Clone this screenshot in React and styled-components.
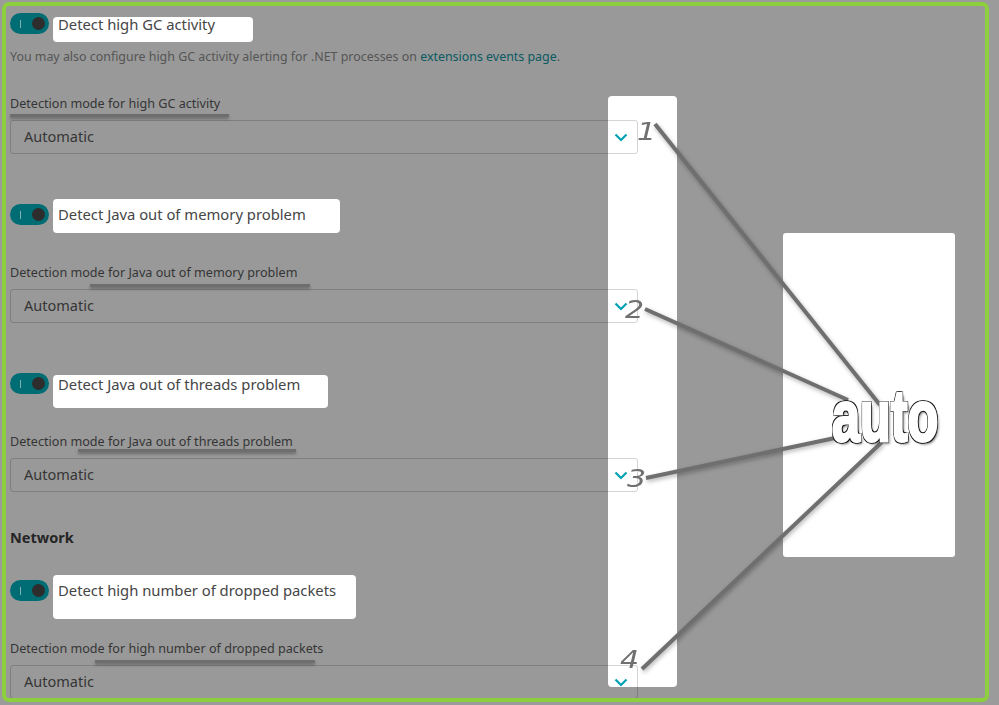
import React from "react";
import styled, { createGlobalStyle } from "styled-components";

const Global = createGlobalStyle`
  html, body { margin: 0; padding: 0; background: #9b9b9b; }
  body { width: 999px; height: 705px; overflow: hidden; font-family: "Noto Sans", "Liberation Sans", sans-serif; }
`;

const Page = styled.div`
  position: relative;
  box-sizing: border-box;
  width: 999px;
  height: 705px;
  padding: 2px 0 0 2px;
`;

const Frame = styled.div`
  box-sizing: border-box;
  width: 987px;
  height: 700px;
  border: 4px solid #8dcf3c;
  border-radius: 7px;
  background: #999;
  overflow: hidden;
  padding: 7px 4px 0;
`;

const ToggleRow = styled.div`
  display: flex;
  align-items: flex-start;
  gap: 4px;
  height: ${p => p.$h}px;
`;

const Toggle = styled.div`
  box-sizing: border-box;
  flex: none;
  width: 39px;
  height: 21px;
  margin-top: ${p => p.$mt || 0}px;
  border-radius: 11px;
  background: #006d75;
  display: flex;
  align-items: center;
  justify-content: space-between;
  padding: 0 4px 0 10px;
  &::before { content: ""; width: 1px; height: 8px; background: #7fb0b4; }
  &::after { content: ""; width: 13px; height: 13px; border-radius: 50%; background: #2d2d2d; }
`;

const Highlight = styled.div`
  box-sizing: border-box;
  flex: none;
  width: ${p => p.$w}px;
  height: ${p => p.$h}px;
  margin-top: ${p => p.$mt || 0}px;
  background: #fff;
  border-radius: 4px;
  padding: ${p => p.$pt || 0}px 0 0 5px;
  font-size: 14.8px;
  line-height: 14px;
  color: #454646;
  white-space: nowrap;
`;

const Note = styled.p`
  margin: 0;
  font-size: 12.41px;
  line-height: 18px;
  color: #555;
  height: 47px;
  white-space: nowrap;
  a { color: #0a5a62; text-decoration: none; }
`;

const FieldLabel = styled.div`
  position: relative;
  font-size: 12.6px;
  line-height: 18px;
  height: 25px;
  color: #353535;
  white-space: nowrap;
`;

const Underline = styled.span`
  position: absolute;
  left: ${p => p.$l}px;
  width: ${p => p.$w}px;
  top: ${p => p.$t}px;
  height: 3px;
  background: #6e6e6e;
  box-shadow: 0 2px 3px rgba(60,60,60,.5);
`;

const Select = styled.div`
  position: relative;
  z-index: 1;
  box-sizing: border-box;
  display: flex;
  align-items: center;
  justify-content: space-between;
  width: 628px;
  height: 34px;
  border: 1px solid rgba(0,0,0,.17);
  border-radius: 3px;
  padding: 0 9px 2px 13px;
  font-size: 14.5px;
  color: #353535;
  margin-bottom: ${p => p.$mb || 0}px;
  svg { margin-top: 2px; }
`;

const SectionTitle = styled.h3`
  margin: 0;
  height: 47px;
  font-size: 14.5px;
  line-height: 18px;
  font-weight: 700;
  color: #252525;
`;

const Column = styled.div`
  position: absolute;
  left: 608px;
  top: 96px;
  width: 69px;
  height: 591px;
  background: #fff;
  border-radius: 4px;
`;

const Box = styled.div`
  position: absolute;
  left: 783px;
  top: 233px;
  width: 172px;
  height: 324px;
  background: #fff;
  border-radius: 3px;
`;

const Lines = styled.svg`
  position: absolute;
  z-index: 2;
  left: 0;
  top: 0;
  pointer-events: none;
  filter: drop-shadow(1px 2px 2px rgba(0,0,0,.3));
`;

const Digit = styled.span`
  position: absolute;
  z-index: 2;
  left: ${p => p.$l}px;
  top: ${p => p.$t}px;
  font-family: "DejaVu Sans", sans-serif;
  font-size: 25px;
  line-height: 30px;
  font-style: italic;
  color: #707070;
  transform: scaleX(1.2);
  transform-origin: left center;
`;

const Auto = styled.span`
  position: absolute;
  z-index: 3;
  left: 832px;
  top: 376px;
  font-family: "Liberation Sans", sans-serif;
  font-weight: 700;
  font-size: 72px;
  line-height: 80px;
  color: #fff;
  -webkit-text-stroke: 3px #fff;
  transform: scaleX(.7);
  transform-origin: left center;
  text-shadow: 2px 0 0 #111, -2px 0 0 #111, 0 2px 0 #111, 0 -2px 0 #111,
    2px 2px 0 #111, -2px 2px 0 #111, 2px -2px 0 #111, -2px -2px 0 #111,
    3px 3px 3px rgba(0,0,0,.5);
`;

const Chevron = () => (
  <svg width="14" height="9" viewBox="0 0 14 9" fill="none">
    <path d="M1.5 1.5 L7 7 L12.5 1.5" stroke="#00a1b2" strokeWidth="2.2" />
  </svg>
);

const Field = ({ label, l, w, t = 20, mb }) => (
  <>
    <FieldLabel>{label}<Underline $l={l} $w={w} $t={t} /></FieldLabel>
    <Select $mb={mb}>Automatic<Chevron /></Select>
  </>
);

const LINES = [
  "M655 124 L880 405",
  "M645 309 L848 400",
  "M646 478 L835 438",
  "M642 669 L882 442",
];

export default function App() {
  return (
    <Page>
      <Global />
      <Frame>
        <ToggleRow $h={35}>
          <Toggle />
          <Highlight $w={200} $h={25} $mt={4}>Detect high GC activity</Highlight>
        </ToggleRow>
        <Note>You may also configure high GC activity alerting for .NET processes on <a>extensions events page</a>.</Note>
        <Field label="Detection mode for high GC activity" l={0} w={219} t={19} mb={45} />
        <ToggleRow $h={65}>
          <Toggle $mt={5} />
          <Highlight $w={287} $h={34} $pt={8}>Detect Java out of memory problem</Highlight>
        </ToggleRow>
        <Field label="Detection mode for Java out of memory problem" l={80} w={220} mb={50} />
        <ToggleRow $h={60}>
          <Toggle />
          <Highlight $w={275} $h={33} $mt={2} $pt={2}>Detect Java out of threads problem</Highlight>
        </ToggleRow>
        <Field label="Detection mode for Java out of threads problem" l={68} w={218} t={16} mb={36} />
        <SectionTitle>Network</SectionTitle>
        <ToggleRow $h={65}>
          <Toggle $mt={5} />
          <Highlight $w={303} $h={44} $pt={8}>Detect high number of dropped packets</Highlight>
        </ToggleRow>
        <Field label="Detection mode for high number of dropped packets" l={85} w={220} />
      </Frame>

      <Column />
      <Box />
      <Lines width="999" height="705" viewBox="0 0 999 705" fill="none">
        {LINES.map(d => <path key={d} d={d} stroke="#6f6f6f" strokeWidth="4" />)}
      </Lines>
      <Digit $l={637} $t={117}>1</Digit>
      <Digit $l={625} $t={295}>2</Digit>
      <Digit $l={627} $t={464}>3</Digit>
      <Digit $l={620} $t={645}>4</Digit>
      <Auto>auto</Auto>
    </Page>
  );
}
